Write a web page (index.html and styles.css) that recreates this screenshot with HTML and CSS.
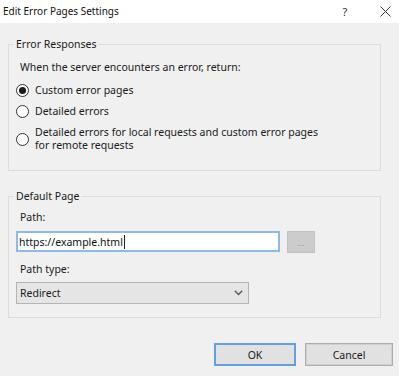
FILE: index.html
```html
<!DOCTYPE html>
<html lang="en">
<head>
<meta charset="utf-8">
<title>Edit Error Pages Settings</title>
<link rel="stylesheet" href="styles.css">
</head>
<body>
<div class="dialog">
  <div class="titlebar">
    <span class="title">Edit Error Pages Settings</span>
    <span class="help">?</span>
    <span class="close">
      <svg width="11" height="11" viewBox="0 0 11 11"><path d="M0.5 0.5 L10.5 10.5 M10.5 0.5 L0.5 10.5" stroke="#333" stroke-width="1" fill="none"/></svg>
    </span>
  </div>
  <div class="body">
    <fieldset class="group group-responses">
      <legend>Error Responses</legend>
      <p class="intro">When the server encounters an error, return:</p>
      <div class="radios">
        <div class="radio"><span class="radio-dot checked"></span><span class="radio-text">Custom error pages</span></div>
        <div class="radio"><span class="radio-dot"></span><span class="radio-text">Detailed errors</span></div>
        <div class="radio"><span class="radio-dot"></span><span class="radio-text">Detailed errors for local requests and custom error pages<br>for remote requests</span></div>
      </div>
    </fieldset>
    <fieldset class="group group-default">
      <legend>Default Page</legend>
      <div class="field-label">Path:</div>
      <div class="path-row">
        <div class="textbox">https://example.html<span class="caret"></span></div>
        <div class="browse">...</div>
      </div>
      <div class="field-label label-type">Path type:</div>
      <div class="select">
        <span>Redirect</span>
        <svg width="9" height="6" viewBox="0 0 9 6"><path d="M0.8 0.8 L4.5 4.5 L8.2 0.8" stroke="#555" stroke-width="1.3" fill="none"/></svg>
      </div>
    </fieldset>
    <div class="actions">
      <div class="btn btn-ok">OK</div>
      <div class="btn btn-cancel">Cancel</div>
    </div>
  </div>
</div>
</body>
</html>
```
FILE: styles.css
```css
* { box-sizing: border-box; }
html, body {
  margin: 0;
  padding: 0;
}
body {
  width: 399px;
  height: 376px;
  overflow: hidden;
  background: #f0f0f0;
  font-family: "Noto Sans", "Open Sans", sans-serif;
  font-size: 10.5px;
  color: #1a1a1a;
}
.dialog {
  width: 399px;
  height: 376px;
  display: flex;
  flex-direction: column;
}
.titlebar {
  height: 23px;
  background: #ffffff;
  display: flex;
  align-items: center;
  padding-left: 3px;
}
.title {
  flex: 1;
  color: #111;
  font-size: 10px;
  line-height: 14px;
  margin-top: -2px;
}
.help {
  width: 12px;
  text-align: center;
  color: #333;
  font-size: 11px;
  margin-right: 29px;
}
.close {
  width: 11px;
  height: 11px;
  margin-right: 8px;
  display: flex;
}
.body {
  flex: 1;
  display: flex;
  flex-direction: column;
}
.group {
  margin: 0 18px 0 8px;
  border: 1px solid #dcdcdc;
  padding: 0 7px;
  min-width: 0;
}
.group legend {
  padding: 0 2px;
  margin-left: -2px;
  line-height: 14px;
  height: 14px;
}
.group-responses {
  margin-top: 14px;
  padding-top: 9px;
  padding-bottom: 18px;
}
.group-default {
  margin-top: 18px;
  padding-top: 7px;
  padding-bottom: 13px;
}
.intro {
  margin: 0;
  padding-left: 4px;
  line-height: 14px;
}
.radios {
  margin-top: 10px;
  display: flex;
  flex-direction: column;
  gap: 8px;
}
.radio {
  display: flex;
  align-items: center;
  gap: 6px;
}
.radio-text {
  line-height: 13px;
}
.radio-dot {
  width: 13px;
  height: 13px;
  flex: none;
  border: 1px solid #333;
  border-radius: 50%;
  background: #fff;
  display: flex;
  align-items: center;
  justify-content: center;
}
.radio-dot.checked::after {
  content: "";
  width: 7px;
  height: 7px;
  border-radius: 50%;
  background: #1a1a1a;
}
.field-label {
  padding-left: 4px;
  line-height: 14px;
}
.path-row {
  margin-top: 7px;
  display: flex;
  align-items: flex-start;
  gap: 7px;
  height: 22px;
}
.textbox {
  width: 264px;
  height: 21px;
  background: #fff;
  border: 2px solid #8dbbe9;
  display: flex;
  align-items: center;
  padding-left: 1px;
  color: #111;
}
.caret {
  width: 1px;
  height: 14px;
  background: #222;
  margin-left: 1px;
}
.browse {
  width: 28px;
  height: 22px;
  background: #cccccc;
  border: 1px solid #c2c2c2;
  color: #9a9a9a;
  font-size: 9px;
  display: flex;
  align-items: flex-end;
  justify-content: center;
  padding-bottom: 5px;
  line-height: 9px;
}
.label-type {
  margin-top: 9px;
}
.select {
  margin-top: 6px;
  width: 233px;
  height: 22px;
  background: #e5e5e5;
  border: 1px solid #b4b4b4;
  display: flex;
  align-items: center;
  justify-content: space-between;
  padding: 0 5px 0 3px;
}
.actions {
  margin-top: 25px;
  display: flex;
  justify-content: flex-end;
  gap: 9px;
  padding-right: 6px;
}
.btn {
  height: 23px;
  background: #e1e1e1;
  display: flex;
  align-items: center;
  justify-content: center;
}
.btn-ok {
  width: 82px;
  border: 2px solid #5fa2e4;
}
.btn-cancel {
  width: 88px;
  border: 1px solid #adadad;
  box-shadow: inset 0 0 0 1px #d0d0d0;
}
```
